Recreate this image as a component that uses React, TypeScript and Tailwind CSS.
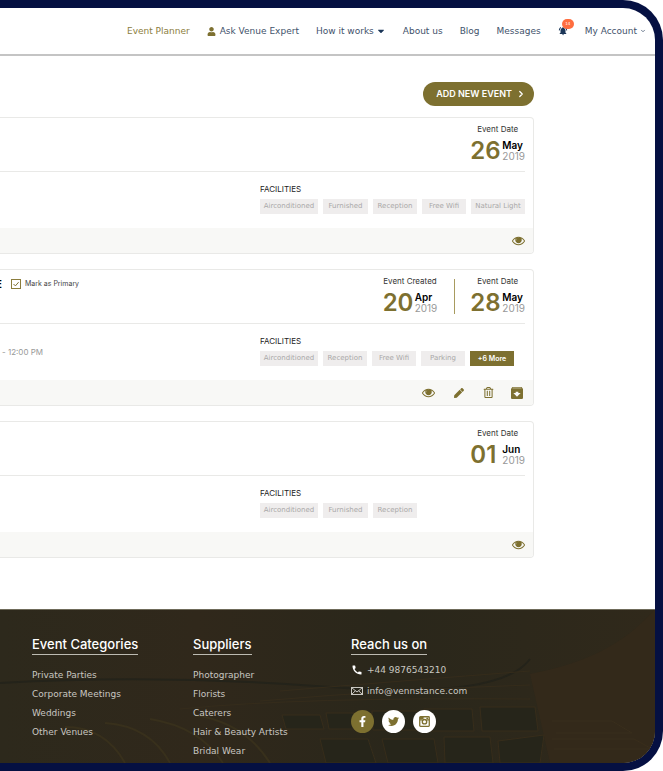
import type { ReactNode } from "react";
import { FaCaretDown, FaFacebookF, FaPen, FaRegTrashAlt, FaTwitter, FaUser } from "react-icons/fa";
import { MdArchive, MdCall, MdNotificationsActive } from "react-icons/md";
import { ChevronDown, ChevronRight } from "lucide-react";

function EyeIcon() {
  return (
    <svg viewBox="0 0 1792 1792" className="size-[13px]" fill="currentColor" aria-hidden="true">
      <path d="M1664 960q-152-236-381-353 61 104 61 225 0 185-131.5 316.5t-316.5 131.5-316.5-131.5-131.5-316.5q0-121 61-225-229 117-381 353 133 205 333.5 326.5t434.5 121.5 434.5-121.500 333.500-326.500zm-720-384q0-20-14-34t-34-14q-125 0-214.500 89.500t-89.500 214.500q0 20 14 34t34 14 34-14 14-34q0-86 61-147t147-61q20 0 34-14t14-34zm848 384q0 34-20 69-140 230-376.500 368.500t-499.500 138.500-499.500-139-376.500-368q-20-35-20-69t20-69q140-229 376.500-368t499.500-139 499.500 139 376.500 368q20 35 20 69z" />
      <path d="M896 528a330 330 0 1 0 330 330 330 330 0 0 0-60-190 120 120 0 0 1-190-120q-40-20-80-20z" />
    </svg>
  );
}

function MailIcon() {
  return (
    <svg viewBox="0 0 12 8" className="h-2 w-3" fill="none" stroke="currentColor" strokeWidth="1" aria-hidden="true">
      <rect x="0.5" y="0.5" width="11" height="7" />
      <path d="M0.800 0.800 6 5l5.200-4.200M0.800 7.200l3.600-3.400M11.200 7.200 7.600 3.800" />
    </svg>
  );
}

function InstagramIcon() {
  return (
    <svg viewBox="0 0 12 12" className="size-[11px]" fill="none" stroke="currentColor" aria-hidden="true">
      <rect x="0.800" y="0.800" width="10.400" height="10.400" rx="0.800" strokeWidth="1.400" />
      <path d="M1 4.200h2.800M8.200 4.200H11" strokeWidth="1.400" />
      <path d="M1 1h4v2.500H1z" fill="currentColor" stroke="none" />
      <circle cx="6" cy="6.200" r="2.400" strokeWidth="1.500" />
      <rect x="8" y="1.800" width="2" height="1.600" fill="currentColor" stroke="none" />
    </svg>
  );
}

function EventDate({ label, day, month, year }: { label: string; day: string; month: string; year: string }) {
  return (
    <div className="flex flex-col items-center">
      <span className="text-[8px] leading-3 text-[#333]">{label}</span>
      <div className="mt-[2px] flex items-center gap-[2px]">
        <span className="w-[30px] text-[24px] leading-7 font-semibold text-[#7d7030]">{day}</span>
        <span className="flex flex-col text-[10px] leading-[11px]">
          <span className="font-semibold text-black">{month}</span>
          <span className="text-[#999]">{year}</span>
        </span>
      </div>
    </div>
  );
}

const chipWidths: Record<string, string> = {
  Airconditioned: "w-[58px]",
  Furnished: "w-[45px]",
  "Natural Light": "w-[54px]",
};

type CardProps = { header?: ReactNode; dates: ReactNode; time?: string; facilities: string[]; more?: string; actions: ReactNode };

function EventCard({ header, dates, time, facilities, more, actions }: CardProps) {
  return (
    <article className="overflow-hidden rounded-r-[4px] border border-l-0 border-[#e9e9e7]">
      <div className="mr-2 flex h-[54px] justify-between border-b border-[#e9e9e7] pt-[5px]">
        <div>{header}</div>
        <div className="flex">{dates}</div>
      </div>
      <div className="mr-2 flex h-14 justify-between">
        <p className="pt-[22px] pl-[2px] text-[8px] leading-3 text-[#999]">{time}</p>
        <div className="w-[265px] pt-[11px]">
          <h3 className="text-[8px] leading-3 text-[#222]">FACILITIES</h3>
          <ul className="mt-[4px] flex gap-[5px] font-['DejaVu_Sans',sans-serif] text-[7px] leading-[15px] whitespace-nowrap text-[#a9a8a8]">
            {facilities.map((name) => (
              <li key={name} className={`${chipWidths[name] ?? "w-[44px]"} bg-[#efeded] text-center`}>
                {name}
              </li>
            ))}
            {more && (
              <li>
                <button className="block h-[15px] w-[44px] bg-[#7d7030] font-['Inter',sans-serif] font-semibold text-white">{more}</button>
              </li>
            )}
          </ul>
        </div>
      </div>
      <div className="flex h-[25px] items-center justify-end bg-[#f8f8f6] pr-2 text-[#7d7030]">{actions}</div>
    </article>
  );
}

function Hall() {
  return (
    <svg className="absolute inset-0 size-full" viewBox="0 0 655 154" preserveAspectRatio="xMidYMid slice" fill="none" aria-hidden="true">
      <defs>
        <linearGradient id="wall" x1="0" y1="0" x2="1" y2="0">
          <stop offset="0" stopColor="#2d291c" />
          <stop offset="0.300" stopColor="#30281b" />
          <stop offset="0.600" stopColor="#2a271b" />
          <stop offset="1" stopColor="#30291b" />
        </linearGradient>
      </defs>
      <rect width="655" height="154" fill="url(#wall)" />
      <path d="M655 0C620 40 580 55 530 65L550 154H655Z" fill="#33291a" />
      <path d="M0 74Q160 65 330 78T530 50" stroke="#24231a" strokeWidth="2" />
      <path d="M280 82Q400 72 530 62M260 92Q400 80 530 76M180 100Q300 88 530 90" stroke="#352c1b" />
      <path d="M65 118q40 0 60 36M105 114q45 3 65 40M150 110q50 8 73 44M195 106q50 8 75 48" stroke="#38301c" strokeWidth="2" />
      <g stroke="#372d1b" fill="#26251a">
        <path d="M282 106h38l4 14h-38zM326 104h40l3 16h-40zM372 102h45l2 19h-46zM424 100h48l2 22h-49zM480 98h55l3 24h-56z" />
        <path d="M320 130h48l8 24h-50zM382 130h52l4 24h-50zM444 128h46l3 26h-48zM498 132l46-6-4 28h-40z" />
      </g>
      <path d="M552 112h60l20 12h-76M552 130h82l18 10h-98" stroke="#392e1c" />
      <path d="M0 0.500H655" stroke="#6f6b5a" />
    </svg>
  );
}

function FooterHeading({ children }: { children: ReactNode }) {
  return <h2 className="w-max border-b border-[#bdbbb2] pb-[2px] text-[13px] leading-4 font-medium text-white">{children}</h2>;
}

function FooterLinks({ title, links }: { title: string; links: string[] }) {
  return (
    <nav aria-label={title}>
      <FooterHeading>{title}</FooterHeading>
      <ul className="mt-[11px] font-['DejaVu_Sans',sans-serif] text-[9px] leading-[19px] text-[#c9c7c1]">
        {links.map((link) => (
          <li key={link}>
            <a href="#">{link}</a>
          </li>
        ))}
      </ul>
    </nav>
  );
}

export default function App() {
  return (
    <div className="flex min-h-screen flex-col overflow-hidden rounded-r-[40px] border-8 border-l-0 border-[#051042] bg-white font-['Inter',sans-serif]">
      <header className="flex h-12 items-center justify-end border-b-2 border-[#c4c4c4] pr-[9px]">
        <nav aria-label="Main" className="flex items-center gap-[17px] font-['DejaVu_Sans',sans-serif] text-[9px] leading-3 whitespace-nowrap text-[#3f526b]">
          <a href="#" className="text-[#8b7d3d]">Event Planner</a>
          <a href="#" className="flex items-center gap-1">
            <FaUser className="size-[9px] text-[#7d7030]" />
            Ask Venue Expert
          </a>
          <button className="flex items-center gap-[2px]">
            How it works <FaCaretDown className="size-[10px] text-[#1b3658]" />
          </button>
          <a href="#">About us</a>
          <a href="#">Blog</a>
          <a href="#">Messages</a>
          <button aria-label="Notifications" className="relative">
            <MdNotificationsActive className="size-[10px] text-[#1b3658]" />
            <span className="absolute -top-[7px] left-1 flex h-[10px] w-3 items-center justify-center rounded-full bg-[#ff6d3f] text-[4px] leading-none text-white">14</span>
          </button>
          <button className="flex items-center gap-[3px]">
            My Account <ChevronDown className="size-[6px]" strokeWidth={3} />
          </button>
        </nav>
      </header>

      <main className="flex flex-col pt-[26px] pr-[121px] pb-[51px]">
        <button className="flex h-6 items-center gap-1 self-end rounded-full bg-[#7d7030] pr-[8px] pl-[13px] text-[9px] font-semibold text-white">
          ADD NEW EVENT <ChevronRight className="size-[10px]" strokeWidth={3} />
        </button>
        <div className="mt-[11px] flex flex-col gap-[15px]">
          <EventCard
            dates={<EventDate label="Event Date" day="26" month="May" year="2019" />}
            facilities={["Airconditioned", "Furnished", "Reception", "Free Wifi", "Natural Light"]}
            actions={<button aria-label="View event"><EyeIcon /></button>}
          />
          <EventCard
            header={
              <div className="flex items-center pt-[3px]">
                <span className="flex w-[2px] justify-end overflow-hidden text-[11px] leading-3 font-bold text-black">E</span>
                <label className="ml-[9px] flex items-center gap-1 text-[7px] leading-3 text-[#444]">
                  <span className="grid">
                    <input
                      type="checkbox"
                      defaultChecked
                      className="peer col-start-1 row-start-1 size-[10px] appearance-none border border-[#8b7d3d]"
                    />
                    <svg viewBox="0 0 10 10" className="col-start-1 row-start-1 hidden size-[10px] peer-checked:block" fill="none" stroke="#7d7030" aria-hidden="true">
                      <path d="M2.500 5 4.400 6.900 7.600 3.200" />
                    </svg>
                  </span>
                  Mark as Primary
                </label>
              </div>
            }
            dates={
              <>
                <EventDate label="Event Created" day="20" month="Apr" year="2019" />
                <div className="mr-[15px] ml-[17px] mt-1 h-[35px] w-px bg-[#a89b5f]" />
                <EventDate label="Event Date" day="28" month="May" year="2019" />
              </>
            }
            time="- 12:00 PM"
            facilities={["Airconditioned", "Reception", "Free Wifi", "Parking"]}
            more="+6 More"
            actions={
              <div className="flex items-center gap-[19px]">
                <button aria-label="View event"><EyeIcon /></button>
                <button aria-label="Edit event"><FaPen className="size-[10px]" /></button>
                <button aria-label="Delete event"><FaRegTrashAlt className="size-[11px]" /></button>
                <button aria-label="Archive event" className="-ml-1"><MdArchive className="size-4" /></button>
              </div>
            }
          />
          <EventCard
            dates={<EventDate label="Event Date" day="01" month="Jun" year="2019" />}
            facilities={["Airconditioned", "Furnished", "Reception"]}
            actions={<button aria-label="View event"><EyeIcon /></button>}
          />
        </div>
      </main>

      <footer className="relative flex-1">
        <Hall />
        <div className="relative grid grid-cols-[161px_158px_1fr] pt-[27px] pl-8">
          <FooterLinks title="Event Categories" links={["Private Parties", "Corporate Meetings", "Weddings", "Other Venues"]} />
          <FooterLinks title="Suppliers" links={["Photographer", "Florists", "Caterers", "Hair & Beauty Artists", "Bridal Wear"]} />
          <section>
            <FooterHeading>Reach us on</FooterHeading>
            <address className="mt-[9px] flex flex-col gap-[9px] font-['DejaVu_Sans',sans-serif] text-[9px] leading-3 text-[#c9c7c1] not-italic">
              <a href="tel:+449876543210" className="flex items-center gap-1">
                <MdCall className="size-3 text-white" />
                +44 9876543210
              </a>
              <a href="mailto:info@vennstance.com" className="flex items-center gap-1">
                <MailIcon />
                info@vennstance.com
              </a>
            </address>
            <div className="mt-[13px] flex gap-2">
              <a href="#" aria-label="Facebook" className="flex size-[23px] items-center justify-center rounded-full bg-[#7d7030] text-white">
                <FaFacebookF className="size-[11px]" />
              </a>
              <a href="#" aria-label="Twitter" className="flex size-[23px] items-center justify-center rounded-full bg-white text-[#7d7030]">
                <FaTwitter className="size-[11px]" />
              </a>
              <a href="#" aria-label="Instagram" className="flex size-[23px] items-center justify-center rounded-full bg-white text-[#7d7030]">
                <InstagramIcon />
              </a>
            </div>
          </section>
        </div>
      </footer>
    </div>
  );
}
